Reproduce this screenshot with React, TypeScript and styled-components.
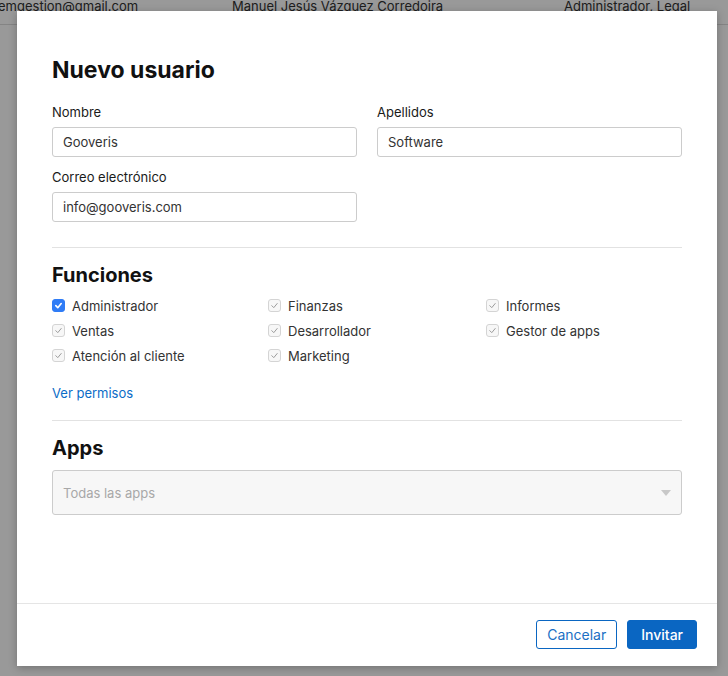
import styled, { createGlobalStyle } from "styled-components";

const GlobalStyle = createGlobalStyle`
    html, body {
        margin: 0;
        padding: 0;
        background: #ffffff;
        font-family: Inter, "Liberation Sans", sans-serif;
        color: #333333;
    }
    * { box-sizing: border-box; }
`

const Page = styled.div`
    position: relative;
    width: 728px;
    height: 676px;
    overflow: hidden;
`

// table row behind the overlay, scrolled so only its bottom shows
const BgRow = styled.div`
    display: grid;
    grid-template-columns: 232px 332px 1fr;
    margin-top: -12px;
    height: 37px;
    align-items: center;
    padding-left: 0;
    border-bottom: 1px solid #dddddd;
    font-size: 13px;
    color: #333333;
    span:first-child { margin-left: -2px; }
`

const Overlay = styled.div`
    position: absolute;
    inset: 0;
    background: rgba(0, 0, 0, 0.4);
`

const Modal = styled.div`
    position: absolute;
    left: 17px;
    top: 11px;
    width: 700px;
    height: 655px;
    background: #ffffff;
    box-shadow: 0 2px 8px rgba(0, 0, 0, 0.25);
    display: flex;
    flex-direction: column;
`

const Body = styled.div`
    flex: 1;
    padding: 45px 35px 0 35px;
    display: flex;
    flex-direction: column;
`

const Title = styled.h2`
    margin: 0 0 20px;
    font-size: 23px;
    line-height: 28px;
    font-weight: 700;
    color: #111111;
`

const SectionTitle = styled.h3`
    margin: 0;
    font-size: 20px;
    line-height: 24px;
    font-weight: 700;
    color: #111111;
`

const FieldGrid = styled.div`
    display: grid;
    grid-template-columns: 305px 305px;
    column-gap: 20px;
    row-gap: 12px;
`

const Field = styled.label`
    display: flex;
    flex-direction: column;
    gap: 7px;
    .label {
        font-size: 13px;
        line-height: 16px;
        font-weight: 400;
        color: #1a1a1a;
    }
`

const Input = styled.div`
    height: 30px;
    border: 1px solid #cccccc;
    border-radius: 3px;
    padding: 0 10px;
    display: flex;
    align-items: center;
    font-size: 13px;
    color: #333333;
`

const Divider = styled.hr<{ $top: number; $bottom: number }>`
    margin: ${p => p.$top}px 0 ${p => p.$bottom}px;
    border: none;
    border-top: 1px solid #e2e2e2;
`

const CheckGrid = styled.div`
    display: grid;
    grid-template-columns: 216px 218px 1fr;
    grid-auto-rows: 25px;
    margin-top: 6px;
`

const CheckItem = styled.div`
    display: flex;
    align-items: center;
    gap: 7px;
    font-size: 13px;
    color: #333333;
`

const Box = styled.span<{ $active?: boolean }>`
    width: 13px;
    height: 13px;
    border-radius: 3px;
    display: flex;
    align-items: center;
    justify-content: center;
    background: ${p => (p.$active ? "#2f7cf6" : "#f7f7f7")};
    border: 1px solid ${p => (p.$active ? "#2f7cf6" : "#d4d4d4")};
    svg { display: block; }
`

const Link = styled.a`
    margin-top: 17px;
    font-size: 13px;
    line-height: 16px;
    color: #0a6cc7;
    text-decoration: none;
    align-self: flex-start;
`

const Select = styled.div`
    margin-top: 10px;
    height: 45px;
    border: 1px solid #cccccc;
    border-radius: 3px;
    background: #f7f7f7;
    display: flex;
    align-items: center;
    justify-content: space-between;
    padding: 0 10px;
    font-size: 13px;
    color: #a8a8a8;
`

const Footer = styled.div`
    height: 63px;
    border-top: 1px solid #e5e5e5;
    display: flex;
    justify-content: flex-end;
    align-items: flex-start;
    gap: 10px;
    padding: 16px 20px 0 0;
`

const Button = styled.button<{ $primary?: boolean }>`
    height: 29px;
    padding: 0 ${p => (p.$primary ? 13 : 10)}px;
    border-radius: 3px;
    font-family: inherit;
    font-size: 14px;
    cursor: pointer;
    border: 1px solid #0a66c2;
    background: ${p => (p.$primary ? "#0a66c2" : "#ffffff")};
    color: ${p => (p.$primary ? "#ffffff" : "#1a6fc4")};
    font-weight: ${p => (p.$primary ? 500 : 400)};
`

const Check = ({ active }: { active?: boolean }) => (
    <Box $active={active}>
        <svg width="9" height="9" viewBox="0 0 10 10">
            <path
                d="M2 5.2 L4.2 7.4 L8 2.8"
                fill="none"
                stroke={active ? "#ffffff" : "#9a9a9a"}
                strokeWidth={active ? 1.8 : 1.1}
                strokeLinecap="round"
                strokeLinejoin="round"
            />
        </svg>
    </Box>
)

const roles = [
    { name: "Administrador", active: true },
    { name: "Finanzas" },
    { name: "Informes" },
    { name: "Ventas" },
    { name: "Desarrollador" },
    { name: "Gestor de apps" },
    { name: "Atención al cliente" },
    { name: "Marketing" },
]

export default function App() {
    return (
        <Page>
            <GlobalStyle />
            <BgRow>
                <span>emgestion@gmail.com</span>
                <span>Manuel Jesús Vázquez Corredoira</span>
                <span>Administrador, Legal</span>
            </BgRow>
            <Overlay />
            <Modal>
                <Body>
                    <Title>Nuevo usuario</Title>
                    <FieldGrid>
                        <Field>
                            <span className="label">Nombre</span>
                            <Input>Gooveris</Input>
                        </Field>
                        <Field>
                            <span className="label">Apellidos</span>
                            <Input>Software</Input>
                        </Field>
                        <Field>
                            <span className="label">Correo electrónico</span>
                            <Input>info@gooveris.com</Input>
                        </Field>
                    </FieldGrid>

                    <Divider $top={25} $bottom={15} />
                    <SectionTitle>Funciones</SectionTitle>
                    <CheckGrid>
                        {roles.map(r => (
                            <CheckItem key={r.name}>
                                <Check active={r.active} />
                                {r.name}
                            </CheckItem>
                        ))}
                    </CheckGrid>
                    <Link href="#">Ver permisos</Link>

                    <Divider $top={19} $bottom={15} />
                    <SectionTitle>Apps</SectionTitle>
                    <Select>
                        Todas las apps
                        <svg width="10" height="6" viewBox="0 0 10 6">
                            <path d="M0 0 L10 0 L5 6 Z" fill="#c8c8c8" />
                        </svg>
                    </Select>
                </Body>
                <Footer>
                    <Button>Cancelar</Button>
                    <Button $primary>Invitar</Button>
                </Footer>
            </Modal>
        </Page>
    )
}
